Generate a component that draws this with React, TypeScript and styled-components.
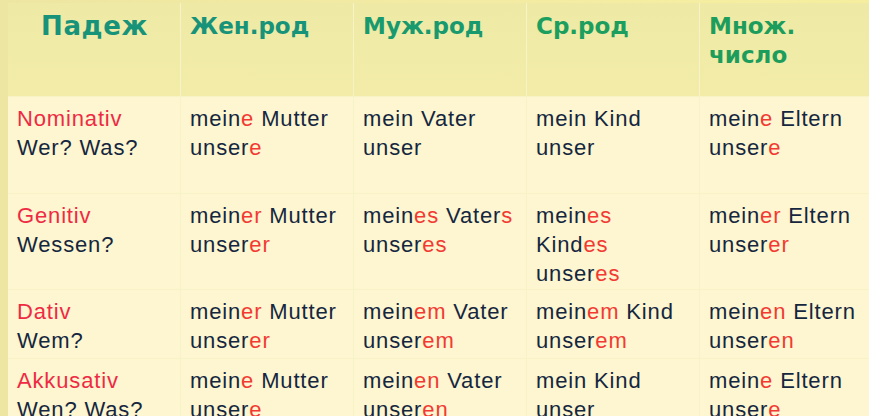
import React from "react";
import styled, { createGlobalStyle } from "styled-components";

const Global = createGlobalStyle`
  html, body { margin: 0; padding: 0; }
  body { background: #f1e9a6; overflow: hidden; }
`;

const Page = styled.div`
  width: 869px;
  height: 416px;
  overflow: hidden;
  padding: 3px 0 0 8px;
  box-sizing: border-box;
  background: linear-gradient(90deg, #ece6a2 0%, #f3eba4 50%, #f6ee9e 100%);
`;

const Table = styled.div`
  display: grid;
  grid-template-columns: 172px 172px 172px 172px 1fr;
  grid-template-rows: 93px 96px 95px 68px 1fr;
  gap: 1px;
  background: #f8f3c6;
  height: 100%;
`;

const HeadCell = styled.div<{ $main?: boolean; $tone?: string }>`
  background: linear-gradient(180deg, #eeeaa6 0%, #f2eca8 100%);
  font-family: "DejaVu Sans", Verdana, sans-serif;
  font-weight: bold;
  font-size: ${(p) => (p.$main ? "26px" : "23px")};
  line-height: 29px;
  color: ${(p) => p.$tone || "#17937a"};
  padding: 9px 8px 0 9px;
  text-align: ${(p) => (p.$main ? "center" : "left")};
  letter-spacing: ${(p) => (p.$main ? "0.6px" : "0")};
`;

const Cell = styled.div`
  background: #fdf6d0;
  font-family: "Liberation Sans", Arial, sans-serif;
  font-size: 22px;
  letter-spacing: 0.85px;
  line-height: 29px;
  color: #15263f;
  padding: 7px 4px 0 9px;
  white-space: nowrap;
`;

const Line = styled.div``;

const Case = styled.span`
  color: #ef2a44;
`;

const End = styled.span`
  color: #f23a33;
`;

type Seg = string | [string];
type CellData = Seg[][];

const render = (lines: CellData) =>
  lines.map((line, i) => (
    <Line key={i}>
      {line.map((s, j) =>
        typeof s === "string" ? <React.Fragment key={j}>{s}</React.Fragment> : <End key={j}>{s[0]}</End>
      )}
    </Line>
  ));

const rows: { c: string; q: string; cells: CellData[] }[] = [
  {
    c: "Nominativ",
    q: "Wer? Was?",
    cells: [
      [["mein", ["e"], " Mutter"], ["unser", ["e"]]],
      [["mein Vater"], ["unser"]],
      [["mein Kind"], ["unser"]],
      [["mein", ["e"], " Eltern"], ["unser", ["e"]]],
    ],
  },
  {
    c: "Genitiv",
    q: "Wessen?",
    cells: [
      [["mein", ["er"], " Mutter"], ["unser", ["er"]]],
      [["mein", ["es"], " Vater", ["s"]], ["unser", ["es"]]],
      [["mein", ["es"]], ["Kind", ["es"]], ["unser", ["es"]]],
      [["mein", ["er"], " Eltern"], ["unser", ["er"]]],
    ],
  },
  {
    c: "Dativ",
    q: "Wem?",
    cells: [
      [["mein", ["er"], " Mutter"], ["unser", ["er"]]],
      [["mein", ["em"], " Vater"], ["unser", ["em"]]],
      [["mein", ["em"], " Kind"], ["unser", ["em"]]],
      [["mein", ["en"], " Eltern"], ["unser", ["en"]]],
    ],
  },
  {
    c: "Akkusativ",
    q: "Wen? Was?",
    cells: [
      [["mein", ["e"], " Mutter"], ["unser", ["e"]]],
      [["mein", ["en"], " Vater"], ["unser", ["en"]]],
      [["mein Kind"], ["unser"]],
      [["mein", ["e"], " Eltern"], ["unser", ["e"]]],
    ],
  },
];

export default function App() {
  return (
    <>
      <Global />
      <Page>
        <Table>
          <HeadCell $main>Падеж</HeadCell>
          <HeadCell>Жен.род</HeadCell>
          <HeadCell $tone="#189a6e">Муж.род</HeadCell>
          <HeadCell $tone="#1c9e5e">Ср.род</HeadCell>
          <HeadCell $tone="#1d9d5c">
            Множ.
            <br />
            число
          </HeadCell>
          {rows.map((r) => (
            <React.Fragment key={r.c}>
              <Cell>
                <Line>
                  <Case>{r.c}</Case>
                </Line>
                <Line>{r.q}</Line>
              </Cell>
              {r.cells.map((cd, k) => (
                <Cell key={k}>{render(cd)}</Cell>
              ))}
            </React.Fragment>
          ))}
        </Table>
      </Page>
    </>
  );
}
